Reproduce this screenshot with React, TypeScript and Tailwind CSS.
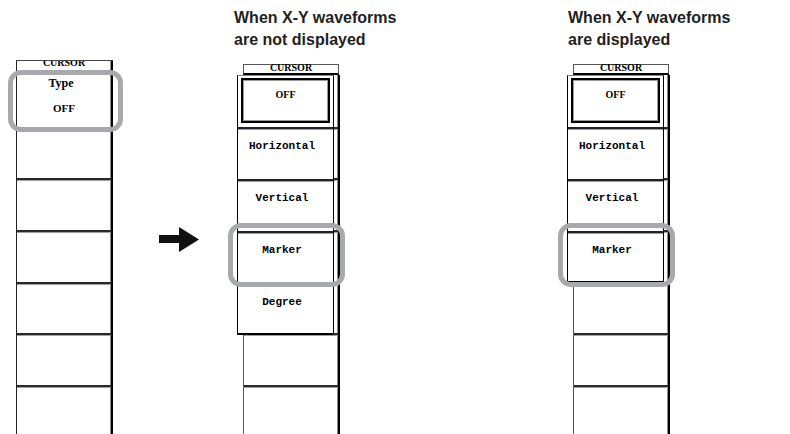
import React from "react";

// soft-key cell heights below the first one (px), top to bottom
const CELL_H = ["h-[51px]", "h-[52px]", "h-[52px]", "h-[51px]", "h-[52px]", "h-[60px]"];

const SERIF = "font-['Liberation_Serif',serif] font-bold text-black leading-none";
const MONO = "font-['Liberation_Mono',monospace] font-bold text-[11px] text-black leading-none";

function KeyColumn({
  firstClass,
  edgeClass = "border-l-[#222]",
  children,
}: {
  firstClass: string;
  edgeClass?: string;
  children?: React.ReactNode;
}) {
  return (
    <div
      className={`bg-white border-l ${edgeClass} border-r-2 border-r-black shadow-[inset_-1px_0_0_#8c8c8c]`}
    >
      <div className={firstClass}>{children}</div>
      {CELL_H.map((h, i) => (
        <div
          key={i}
          className={`${h} border-t-2 border-t-[#2a2a2a] shadow-[inset_0_1px_0_#a0a0a0]`}
        />
      ))}
    </div>
  );
}

function Ring({ className }: { className: string }) {
  return (
    <div
      className={`absolute border-[5px] border-[#a7a9ac] rounded-[13px] pointer-events-none ${className}`}
    />
  );
}

function MenuItem({ label, last }: { label: string; last?: boolean }) {
  return (
    <div
      className={`h-[52px] border-t-2 border-t-[#222] shadow-[inset_0_1px_0_#a0a0a0] pt-[12px] pr-[7px] text-center ${MONO} ${
        last ? "border-b-2 border-b-black" : ""
      }`}
    >
      {label}
    </div>
  );
}

function CursorPanel({ items }: { items: string[] }) {
  return (
    <div className="relative w-[103px]">
      {/* header tab */}
      <div className="ml-[6px] w-[96px] h-[11px] border border-[#555] border-b-2 border-b-black bg-white flex items-end justify-center">
        <span className={`${SERIF} text-[10px] leading-[8px]`}>CURSOR</span>
      </div>

      <div className="relative">
        <div className="ml-[6px] w-[97px]">
          <KeyColumn firstClass="h-[52px]" edgeClass="border-l-[#555]" />
        </div>

        {/* pop-up type menu over the key column */}
        <div className="absolute left-0 top-0 w-[97px] bg-white border-l border-l-black border-r border-r-black border-t border-t-[#888]">
          <div className="h-[51px] pt-[2px] px-[3px]">
            <div className={`h-[45px] border-2 border-black shadow-[inset_0_0_0_1px_#9a9a9a] pt-[10px] text-center ${SERIF} text-[10px]`}>
              OFF
            </div>
          </div>
          {items.map((label, i) => (
            <MenuItem key={label} label={label} last={i === items.length - 1} />
          ))}
        </div>
      </div>

      <Ring className="left-[-9px] top-[159px] w-[117px] h-[64px]" />
    </div>
  );
}

export default function App() {
  return (
    <div className="w-[790px] h-[434px] bg-white overflow-hidden flex font-['Liberation_Sans',sans-serif]">
      {/* left: soft keys before pressing */}
      <div className="relative ml-[16px] mt-[60px] w-[97px] shrink-0">
        <div className="border-t border-t-[#444]">
          <KeyColumn firstClass="h-[66px]">
            <div className="h-[6px] overflow-hidden text-center">
              <div className={`${SERIF} text-[10px] -mt-[3px]`}>CURSOR</div>
            </div>
            <div className={`${SERIF} text-[12px] text-center mt-[10px] pr-[6px]`}>Type</div>
            <div className={`${SERIF} text-[11px] text-center mt-[14px]`}>OFF</div>
          </KeyColumn>
        </div>
        <Ring className="left-[-8px] top-[10px] w-[115px] h-[62px]" />
      </div>

      {/* arrow */}
      <div className="w-[121px] shrink-0 pt-[227px] pl-[46px]">
        <svg width="40" height="25" viewBox="0 0 40 25">
          <polygon points="0,8 20,8 20,0 40,12.5 20,25 20,16 0,16" fill="#111" />
        </svg>
      </div>

      {/* X-Y waveforms not displayed */}
      <div className="w-[333px] shrink-0">
        <div className="pt-[7px] text-[16px] leading-[22px] font-bold text-[#231f20]">
          <div>When X-Y waveforms</div>
          <div>are not displayed</div>
        </div>
        <div className="ml-[3px] mt-[13px]">
          <CursorPanel items={["Horizontal", "Vertical", "Marker", "Degree"]} />
        </div>
      </div>

      {/* X-Y waveforms displayed */}
      <div className="w-[200px] shrink-0">
        <div className="pt-[7px] ml-[1px] text-[16px] leading-[22px] font-bold text-[#231f20]">
          <div>When X-Y waveforms</div>
          <div>are displayed</div>
        </div>
        <div className="mt-[13px]">
          <CursorPanel items={["Horizontal", "Vertical", "Marker"]} />
        </div>
      </div>
    </div>
  );
}
